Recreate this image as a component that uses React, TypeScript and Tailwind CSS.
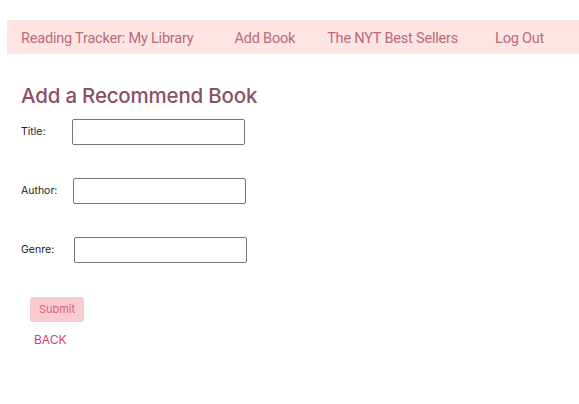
const fields = [
  { label: "Title:", w: "w-[51px]" },
  { label: "Author:", w: "w-[52px]" },
  { label: "Genre:", w: "w-[53px]" },
];

const App = () => {
  return (
    <div className="min-h-[404px] bg-white pt-[20px] pl-[7px] font-['Inter',sans-serif]">
      <nav className="flex items-center h-[34px] pt-[3px] bg-[#ffe4e4] pl-[14px] font-['Roboto',sans-serif] text-[14.5px] tracking-[-0.2px] text-[#b86b7a] whitespace-nowrap">
        <a className="shrink-0 mr-[41px]">Reading Tracker: My Library</a>
        <a className="shrink-0 mr-[32px]">Add Book</a>
        <a className="shrink-0 mr-[37px]">The NYT Best Sellers</a>
        <a className="shrink-0">Log Out</a>
      </nav>

      <div className="pl-[14px]">
        <h1 className="mt-[29px] text-[20.5px] font-medium leading-[26px] tracking-[-0.2px] text-[#8a5068]">
          Add a Recommend Book
        </h1>

        <form className="flex flex-col gap-[33px] mt-[10px]">
          {fields.map((f) => (
            <div key={f.label} className="flex items-center">
              <label className={`${f.w} text-[10.5px] text-[#222]`}>{f.label}</label>
              <input className="w-[173px] h-[26px] border border-[#767676] rounded-[2px]" />
            </div>
          ))}
        </form>

        <button className="mt-[34px] ml-[9px] w-[54px] h-[25px] rounded-[3px] bg-[#f8cccf] text-[11px] text-[#d0627e]">
          Submit
        </button>
        <div className="mt-[9px] ml-[13px] text-[12px] text-[#c9486e]">BACK</div>
      </div>
    </div>
  );
};

export default App;
